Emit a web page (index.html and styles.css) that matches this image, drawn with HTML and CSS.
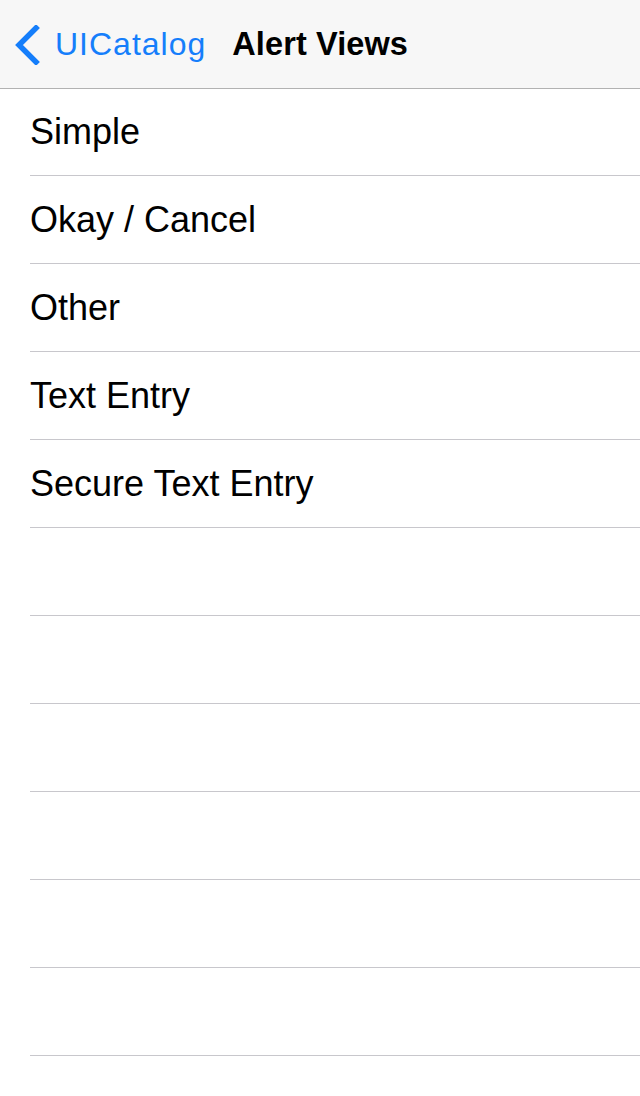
FILE: index.html
```html
<!DOCTYPE html>
<html>
<head>
<meta charset="utf-8">
<link rel="stylesheet" href="styles.css">
</head>
<body>
<header class="navbar">
  <a class="back">
    <svg class="chev" width="26" height="40" viewBox="0 0 26 40"><path d="M22 3 L5 20 L22 37" fill="none" stroke="#157efb" stroke-width="5.5" stroke-linecap="square"/></svg>
    <span class="back-label">UICatalog</span>
  </a>
  <h1 class="title">Alert Views</h1>
</header>
<ul class="list">
  <li class="row">Simple</li>
  <li class="row">Okay / Cancel</li>
  <li class="row">Other</li>
  <li class="row">Text Entry</li>
  <li class="row">Secure Text Entry</li>
  <li class="row"></li>
  <li class="row"></li>
  <li class="row"></li>
  <li class="row"></li>
  <li class="row"></li>
  <li class="row"></li>
</ul>
</body>
</html>
```
FILE: styles.css
```css
* { box-sizing: border-box; }
html, body { margin: 0; padding: 0; background: #fff; }
body {
  width: 640px;
  height: 1096px;
  overflow: hidden;
  font-family: "Liberation Sans", Arial, sans-serif;
  color: #000;
}
.navbar {
  height: 88px;
  background: #f7f7f7;
  box-shadow: 0 1px 0 #b2b2b2;
  display: flex;
  align-items: center;
  padding-left: 14px;
  position: relative;
  z-index: 1;
}
.back {
  display: flex;
  align-items: center;
  color: #157efb;
  gap: 15px;
}
.chev { display: block; margin-top: 1px; }
.back-label {
  font-size: 32px;
  letter-spacing: 1px;
}
.title {
  margin: 0 0 0 26px;
  font-size: 32.5px;
  font-weight: bold;
  letter-spacing: 0.1px;
}
.list {
  list-style: none;
  margin: 0;
  padding: 0 0 0 30px;
}
.row {
  height: 88px;
  border-bottom: 1px solid #c8c7cc;
  display: flex;
  align-items: center;
  font-size: 36px;
  padding-top: 1px;
}
```
